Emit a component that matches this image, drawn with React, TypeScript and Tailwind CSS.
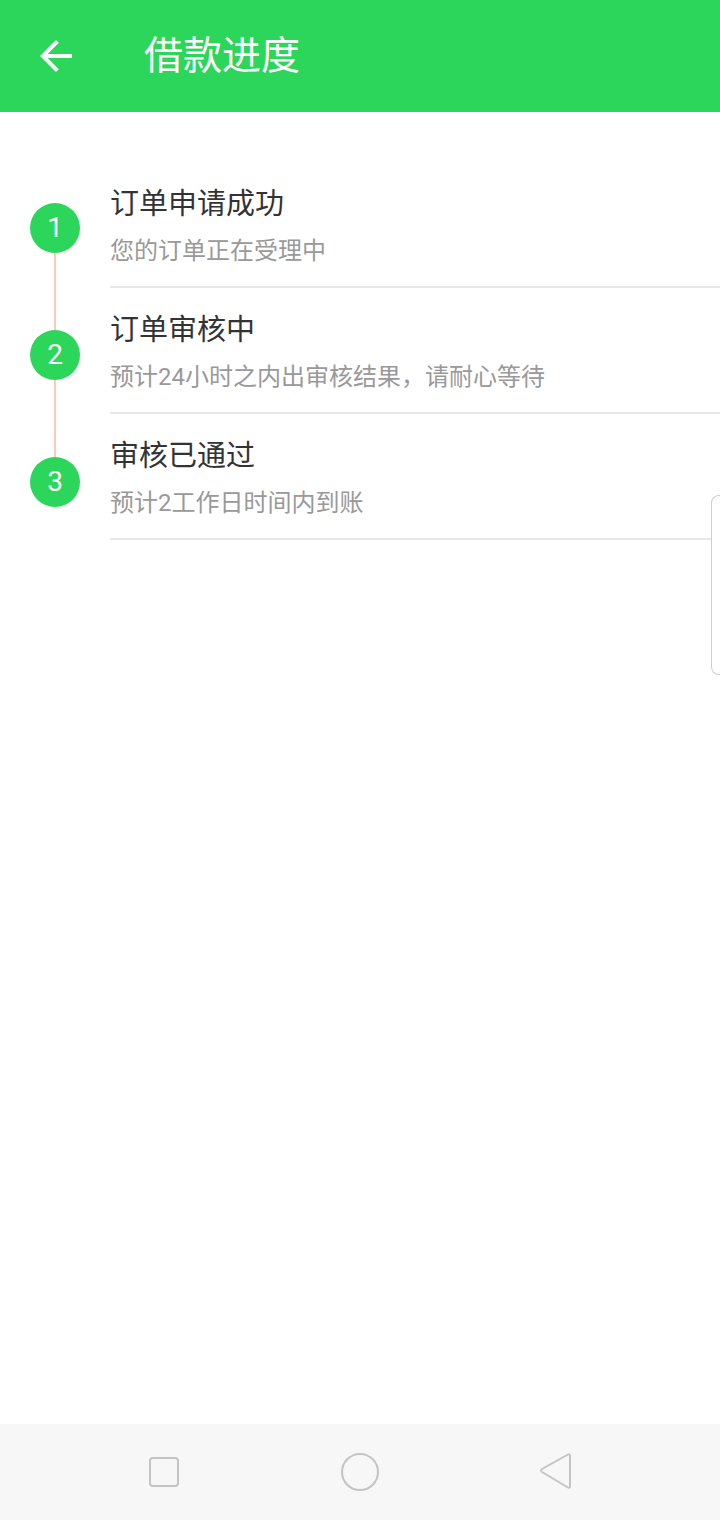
const steps = [
  { id: 1, title: '订单申请成功', desc: '您的订单正在受理中' },
  { id: 2, title: '订单审核中', desc: '预计24小时之内出审核结果，请耐心等待' },
  { id: 3, title: '审核已通过', desc: '预计2工作日时间内到账' },
];

export default function App() {
  return (
    <div
      className="relative flex h-[1520px] w-[720px] flex-col overflow-hidden bg-white"
      style={{ fontFamily: 'Roboto, "Noto Sans CJK SC", sans-serif' }}
    >
      {/* Header */}
      <header className="flex h-[112px] shrink-0 items-center bg-[#2cd65a] pl-[32px]">
        <svg className="h-[48px] w-[48px]" viewBox="0 0 24 24" fill="#ffffff">
          <path d="M20 11H7.83l5.59-5.59L12 4l-8 8 8 8 1.41-1.41L7.83 13H20v-2z" />
        </svg>
        <h1 className="ml-[64px] text-[39px] leading-none text-white">借款进度</h1>
      </header>

      {/* Steps */}
      <div className="flex-1 pt-[50px]">
        {steps.map((step, i) => (
          <div key={step.id} className="flex h-[126px]">
            <div className="flex w-[110px] shrink-0 flex-col items-center">
              <div
                className={
                  i === 0
                    ? 'h-[41px] w-[2px] bg-transparent'
                    : i === 1
                    ? 'h-[42px] w-[2px] bg-[#ffc9b5]'
                    : 'h-[43px] w-[2px] bg-[#ffc9b5]'
                }
              />
              <div className="flex h-[50px] w-[50px] items-center justify-center rounded-full bg-[#2cd65a] text-[28px] text-white">
                {step.id}
              </div>
              <div className={`w-[2px] flex-1 ${i === steps.length - 1 ? 'bg-transparent' : 'bg-[#ffc9b5]'}`} />
            </div>
            <div className="flex flex-1 flex-col border-b-2 border-[#e8e8e8] pt-[23px]">
              <div className="text-[29px] leading-[39px] text-[#333333]">{step.title}</div>
              <div className="mt-[10px] text-[24px] leading-[34px] text-[#999999]">{step.desc}</div>
            </div>
          </div>
        ))}
      </div>

      {/* Floating side tab */}
      <div className="absolute right-0 top-[495px] h-[180px] w-[9px] rounded-l-[8px] border border-r-0 border-[#cfcfcf] bg-white" />

      {/* Nav bar */}
      <nav className="flex h-[96px] shrink-0 items-center bg-[#f7f7f7]">
        <div className="flex w-full items-center">
          <svg className="ml-[148px] h-[32px] w-[32px]" viewBox="0 0 32 32" fill="none" stroke="#c4c4c4" strokeWidth="2">
            <rect x="2" y="2" width="28" height="28" rx="3" />
          </svg>
          <svg className="ml-[160px] h-[40px] w-[40px]" viewBox="0 0 40 40" fill="none" stroke="#c4c4c4" strokeWidth="2">
            <circle cx="20" cy="20" r="18" />
          </svg>
          <svg className="ml-[157px] h-[40px] w-[36px]" viewBox="0 0 36 40" fill="none" stroke="#c4c4c4" strokeWidth="2" strokeLinejoin="round">
            <path d="M33 3.5c0-1-1-1.6-2-1L5 17c-1.2.7-1.2 2.3 0 3l26 15.5c1 .6 2 0 2-1z" />
          </svg>
        </div>
      </nav>
    </div>
  );
}
